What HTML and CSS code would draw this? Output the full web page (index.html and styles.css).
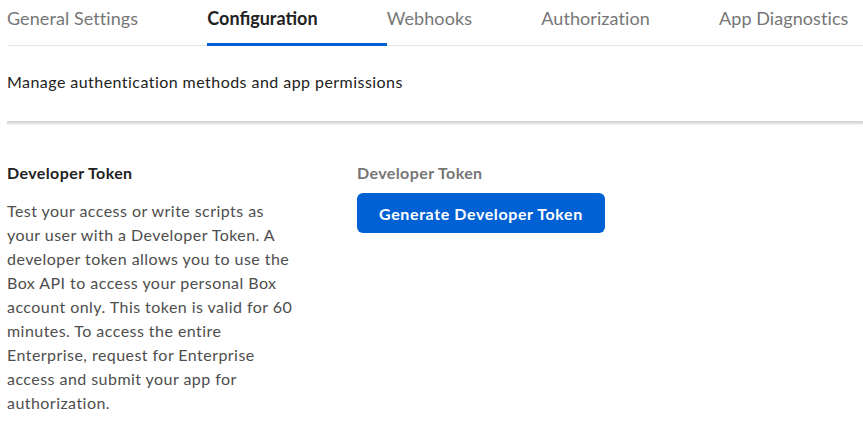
FILE: index.html
```html
<!DOCTYPE html>
<html>
<head>
<meta charset="utf-8">
<link rel="stylesheet" href="styles.css">
</head>
<body>
<nav class="tabs">
  <a class="tab">General Settings</a>
  <a class="tab active">Configuration</a>
  <a class="tab">Webhooks</a>
  <a class="tab">Authorization</a>
  <a class="tab">App Diagnostics</a>
</nav>
<p class="intro">Manage authentication methods and app permissions</p>
<div class="divider"></div>
<section class="row">
  <div class="info">
    <h3 class="title">Developer Token</h3>
    <p class="desc">Test your access or write scripts as your user with a Developer Token. A developer token allows you to use the Box API to access your personal Box account only. This token is valid for 60 minutes. To access the entire Enterprise, request for Enterprise access and submit your app for authorization.</p>
  </div>
  <div class="field">
    <div class="label">Developer Token</div>
    <button class="btn">Generate Developer Token</button>
  </div>
</section>
</body>
</html>
```
FILE: styles.css
```css
* { box-sizing: border-box; }
html, body { margin: 0; padding: 0; background: #fff; }
body {
  font-family: Lato, "Liberation Sans", sans-serif;
  color: #222;
  padding-left: 7px;
  overflow: hidden;
}
.tabs {
  display: flex;
  border-bottom: 1px solid #e8e8e8;
  height: 46px;
  white-space: nowrap;
}
.tab {
  font-size: 18px;
  letter-spacing: 0.075px;
  color: #767676;
  padding-right: 69.25px;
  padding-top: 6px;
  line-height: 24px;
  height: 46px;
  margin-bottom: -1px;
}
.tab:last-child { padding-right: 0; }
.tab.active {
  color: #222;
  font-weight: 700;
  letter-spacing: 0;
  border-bottom: 3px solid #0061d5;
}
.intro {
  margin: 0;
  padding-top: 24px;
  font-size: 16px;
  letter-spacing: 0.45px;
  line-height: 24px;
  color: #222;
}
.divider {
  margin-top: 27px;
  height: 3px;
  background: linear-gradient(#cfcfcf, #e6e6e6);
  box-shadow: 0 1px 2px rgba(0,0,0,0.06);
}
.row {
  display: flex;
  padding-top: 37px;
}
.info { width: 350px; padding-right: 58px; }
.title {
  margin: 0;
  font-size: 16px;
  letter-spacing: 0.4px;
  font-weight: 700;
  line-height: 24px;
  color: #222;
}
.desc {
  margin: 14px 0 0;
  font-size: 16px;
  letter-spacing: 0.45px;
  line-height: 24px;
  color: #4e4e4e;
  width: 292px;
}
.field { display: flex; flex-direction: column; align-items: flex-start; }
.label {
  font-size: 16px;
  letter-spacing: 0.4px;
  font-weight: 700;
  line-height: 24px;
  color: #767676;
}
.btn {
  margin-top: 8px;
  width: 248px;
  height: 40px;
  border: none;
  border-radius: 6px;
  background: #0061d5;
  color: #fff;
  font-family: Lato, "Liberation Sans", sans-serif;
  font-size: 16px;
  letter-spacing: 0.6px;
  font-weight: 700;
  padding: 0;
}
```
